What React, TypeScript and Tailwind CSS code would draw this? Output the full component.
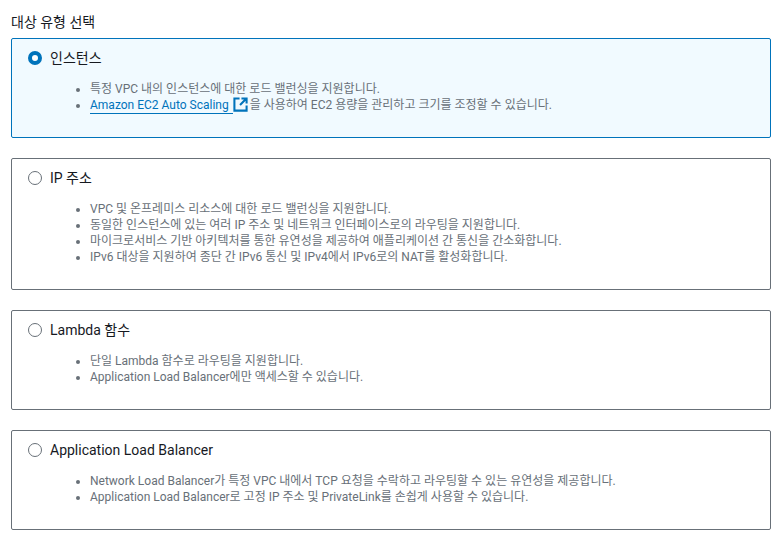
import React from "react";

const font = { fontFamily: 'Roboto, "Noto Sans CJK KR", sans-serif' };

type Card = { title: string; items: React.ReactNode[]; selected?: boolean };

const ExternalIcon = () => (
  <svg viewBox="0 0 16 16" className="inline-block w-[15px] h-[15px] align-[-3px] mr-[2px]" fill="none" stroke="#0073bb" strokeWidth="2.2">
    <path d="M7 1.5H1.5v13h13V9" />
    <path d="M7.5 8.5l6-6M9 1.5h5.5V7" />
  </svg>
);

const cards: Card[] = [
  {
    title: "인스턴스",
    selected: true,
    items: [
      "특정 VPC 내의 인스턴스에 대한 로드 밸런싱을 지원합니다.",
      <>
        <a className="text-[#0073bb] border-b border-[#0073bb] pb-[1px] pr-[4px]">Amazon EC2 Auto Scaling</a>
        <ExternalIcon />을 사용하여 EC2 용량을 관리하고 크기를 조정할 수 있습니다.
      </>,
    ],
  },
  {
    title: "IP 주소",
    items: [
      "VPC 및 온프레미스 리소스에 대한 로드 밸런싱을 지원합니다.",
      "동일한 인스턴스에 있는 여러 IP 주소 및 네트워크 인터페이스로의 라우팅을 지원합니다.",
      "마이크로서비스 기반 아키텍처를 통한 유연성을 제공하여 애플리케이션 간 통신을 간소화합니다.",
      "IPv6 대상을 지원하여 종단 간 IPv6 통신 및 IPv4에서 IPv6로의 NAT를 활성화합니다.",
    ],
  },
  {
    title: "Lambda 함수",
    items: ["단일 Lambda 함수로 라우팅을 지원합니다.", "Application Load Balancer에만 액세스할 수 있습니다."],
  },
  {
    title: "Application Load Balancer",
    items: [
      "Network Load Balancer가 특정 VPC 내에서 TCP 요청을 수락하고 라우팅할 수 있는 유연성을 제공합니다.",
      "Application Load Balancer로 고정 IP 주소 및 PrivateLink를 손쉽게 사용할 수 있습니다.",
    ],
  },
];

export default function App() {
  return (
    <div style={font} className="w-[781px] h-[537px] overflow-hidden bg-white pl-[11px] pr-[10px] pt-[14px]">
      <div className="text-[14px] leading-[16px] text-[#16191f] h-[24px]">대상 유형 선택</div>
      <div className="flex flex-col gap-[20px]">
        {cards.map((c) => (
          <div
            key={c.title}
            className={`rounded-[2px] border px-[16px] pt-[9px] ${c.selected ? "border-[#0073bb] bg-[#f1faff]" : "border-[#687078] bg-white"} ${c.items.length === 4 ? "h-[132px]" : "h-[100px]"}`}
          >
            <div className="flex items-center h-[20px] gap-[8px]">
              {c.selected ? (
                <span className="w-[14px] h-[14px] rounded-full border-[4px] border-[#0073bb] bg-white" />
              ) : (
                <span className="w-[14px] h-[14px] rounded-full border border-[#687078] bg-white" />
              )}
              <span className="text-[14px] leading-[20px] text-[#16191f]">{c.title}</span>
            </div>
            <ul className="list-disc pl-[62px] pt-[13px] text-[12px] leading-[16px] text-[#687078] marker:text-[#687078]">
              {c.items.map((it, i) => (
                <li key={i}>{it}</li>
              ))}
            </ul>
          </div>
        ))}
      </div>
    </div>
  );
}
